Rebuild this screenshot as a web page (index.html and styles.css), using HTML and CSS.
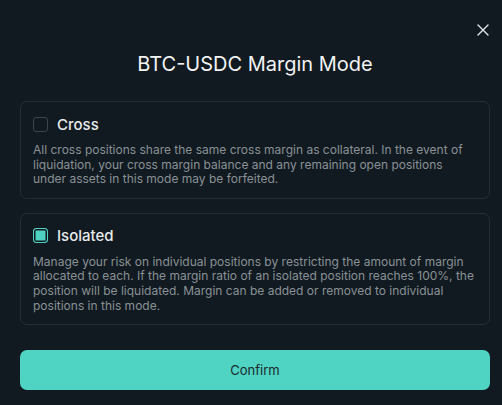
FILE: index.html
```html
<!DOCTYPE html>
<html lang="en">
<head>
<meta charset="utf-8">
<title>BTC-USDC Margin Mode</title>
<link rel="stylesheet" href="styles.css">
</head>
<body>
<div class="modal">
  <button class="close" aria-label="Close">
    <svg width="12" height="12" viewBox="0 0 12 12"><path d="M1 1 L11 11 M11 1 L1 11" stroke="#e3e7e9" stroke-width="1.4" stroke-linecap="round"/></svg>
  </button>
  <h1 class="title">BTC-USDC Margin Mode</h1>
  <div class="options">
    <div class="card">
      <div class="row">
        <span class="check"></span>
        <span class="label">Cross</span>
      </div>
      <p class="desc">All cross positions share the same cross margin as collateral. In the event of liquidation, your cross margin balance and any remaining open positions under assets in this mode may be forfeited.</p>
    </div>
    <div class="card">
      <div class="row">
        <span class="check checked"></span>
        <span class="label">Isolated</span>
      </div>
      <p class="desc">Manage your risk on individual positions by restricting the amount of margin allocated to each. If the margin ratio of an isolated position reaches 100%, the position will be liquidated. Margin can be added or removed to individual positions in this mode.</p>
    </div>
  </div>
  <button class="confirm">Confirm</button>
</div>
</body>
</html>
```
FILE: styles.css
```css
* { box-sizing: border-box; }
html, body { margin: 0; padding: 0; }
body {
  background: #111a20;
  font-family: Inter, "Noto Sans", "Liberation Sans", sans-serif;
  width: 502px;
  height: 405px;
  overflow: hidden;
}
.modal {
  position: relative;
  padding: 52px 12px 0 20px;
}
.close {
  position: absolute;
  top: 24px;
  right: 13px;
  width: 12px;
  height: 12px;
  padding: 0;
  border: 0;
  background: none;
  display: flex;
}
.title {
  margin: 0;
  text-align: center;
  font-size: 20px;
  line-height: 24px;
  font-weight: 400;
  color: #f1f3f4;
}
.options {
  margin-top: 25px;
  display: flex;
  flex-direction: column;
  gap: 14px;
}
.card {
  border: 1px solid #232d33;
  border-radius: 7px;
  padding: 13px 12px 11px;
}
.row {
  display: flex;
  align-items: center;
  gap: 9px;
  height: 18px;
}
.check {
  width: 15px;
  height: 15px;
  border: 1px solid #3a454b;
  border-radius: 3px;
  flex: none;
}
.check.checked {
  border: 1.5px solid #4fd1c0;
  background: #4fd1c0;
  box-shadow: inset 0 0 0 1.5px #111a20;
}
.label {
  font-size: 15px;
  font-weight: 500;
  color: #e8ebed;
}
.desc {
  margin: 10px 0 0;
  font-size: 12px;
  line-height: 14.6px;
  color: #899196;
}
.confirm {
  margin-top: 25px;
  width: 470px;
  height: 40px;
  border: 0;
  border-radius: 7px;
  background: #4fd3c2;
  color: #1b2a2c;
  font-family: inherit;
  font-size: 13px;
  font-weight: 400;
  display: block;
}
```
